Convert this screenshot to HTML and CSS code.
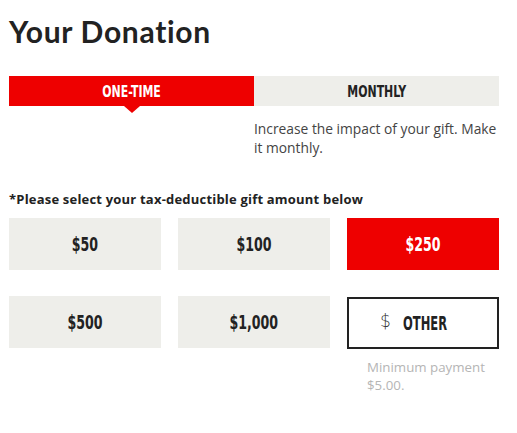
FILE: index.html
```html
<!DOCTYPE html>
<html lang="en">
<head>
    <meta charset="UTF-8">
    <meta name="viewport" content="width=device-width, initial-scale=1.0">
    <title>Your Donation</title>
    <link rel="stylesheet" href="styles.css">
</head>
<body>

<div class="donation">
    <h1>Your Donation</h1>

    <div class="tabs">
        <button class="tab active"><span class="cond">One-Time</span></button>
        <button class="tab"><span class="cond">Monthly</span></button>
    </div>
    <div class="tab-note">
        <div></div>
        <p>Increase the impact of your gift. Make it monthly.</p>
    </div>

    <p class="label">*Please select your tax-deductible gift amount below</p>

    <div class="amounts">
        <button class="amount"><span class="cond">$50</span></button>
        <button class="amount"><span class="cond">$100</span></button>
        <button class="amount selected"><span class="cond">$250</span></button>
        <button class="amount"><span class="cond">$500</span></button>
        <button class="amount"><span class="cond">$1,000</span></button>
        <label class="other">
            <span class="dollar">$</span>
            <span class="cond">Other</span>
        </label>
        <p class="min-note">Minimum payment $5.00.</p>
    </div>
</div>

</body>
</html>
```

FILE: styles.css
```css
body {
    margin: 0;
    padding: 0;
    background-color: #fff;
    font-family: "Open Sans", Arial, sans-serif;
    color: #333;
}
.donation {
    width: 490px;
    padding: 13px 0 0 9px;
}
h1 {
    margin: 0 0 27px;
    font-family: Lato, "Open Sans", sans-serif;
    font-weight: 700;
    font-size: 30px;
    line-height: 36px;
    letter-spacing: 0.7px;
    color: #222;
}
.cond {
    display: inline-block;
    font-family: "DejaVu Sans Condensed", "DejaVu Sans", sans-serif;
    font-stretch: condensed;
    font-weight: 700;
    text-transform: uppercase;
    transform: scaleX(0.76);
}
button {
    border: none;
    cursor: pointer;
    padding: 0;
}
.tabs {
    display: flex;
}
.tab {
    position: relative;
    flex: 1;
    height: 30px;
    background-color: #eeeeea;
    color: #222;
    font-size: 16px;
}
.tab.active {
    background-color: #ee0000;
    color: #fff;
}
.tab.active::after {
    content: "";
    position: absolute;
    left: 50%;
    bottom: -7px;
    margin-left: -8px;
    border-left: 8px solid transparent;
    border-right: 8px solid transparent;
    border-top: 7px solid #ee0000;
}
.tab-note {
    display: flex;
}
.tab-note div, .tab-note p {
    flex: 1;
}
.tab-note p {
    margin: 13px 0 0;
    font-size: 13.8px;
    line-height: 19px;
    color: #444;
}
.label {
    margin: 33px 0 10px;
    font-weight: 700;
    font-size: 13px;
    letter-spacing: 0.2px;
    color: #222;
}
.amounts {
    display: grid;
    grid-template-columns: repeat(3, 152px);
    grid-template-rows: 52px 52px auto;
    column-gap: 17px;
    row-gap: 26px;
}
.amount {
    background-color: #eeeeea;
    color: #222;
    font-size: 20px;
}
.amount .cond {
    transform: scaleX(0.7);
}
.amount.selected {
    background-color: #ee0000;
    color: #fff;
}
.other {
    box-sizing: border-box;
    display: flex;
    align-items: center;
    height: 52px;
    margin-top: 1px;
    padding-left: 31px;
    border: 2px solid #222;
    color: #222;
    font-size: 20px;
}
.other .cond {
    transform: scaleX(0.64);
    transform-origin: left center;
}
.other .dollar {
    margin: -4px 12px 0 0;
    font-family: "DejaVu Sans", sans-serif;
    font-weight: 300;
    font-size: 17px;
    color: #333;
}
.min-note {
    grid-column: 3;
    margin: -16px 0 0 20px;
    font-size: 13.3px;
    line-height: 18px;
    color: #b5b5b5;
}
```
